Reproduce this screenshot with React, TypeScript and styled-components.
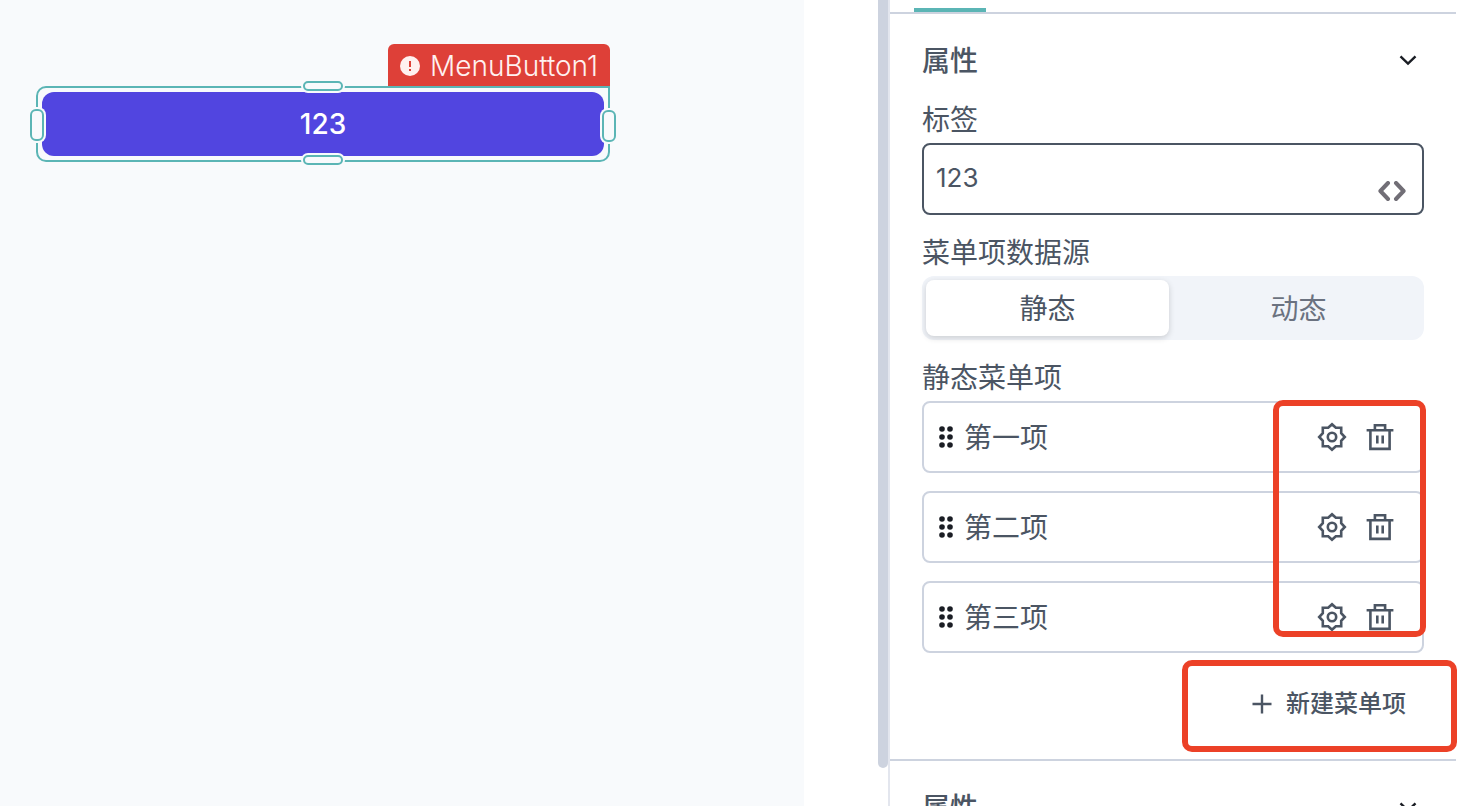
import React, { useState } from "react";
import styled, { createGlobalStyle, css } from "styled-components";

const teal = "#5bb5b5";
const ink = "#4b5563";
const line = "#cdd3df";
const canvasBg = "#f8fafc";

const GlobalStyle = createGlobalStyle`
  *, *::before, *::after { box-sizing: border-box; }
  body { margin: 0; background: #fff; }
  body, button, input {
    font-family: Inter, "Noto Sans CJK SC", sans-serif;
    font-size: 28px;
    line-height: 40px;
    color: ${ink};
  }
  button { border: 0; padding: 0; background: none; cursor: pointer; }
  h2 { margin: 0; }
`;

const Editor = styled.div`
  display: flex;
  height: 100vh;
  overflow: hidden;
`;

const Canvas = styled.main`
  flex: 1;
  min-width: 0;
  padding: 44px 36px;
  background: ${canvasBg};
`;

const Gutter = styled.div`
  flex: none;
  display: flex;
  justify-content: flex-end;
  width: 84px;
  padding-bottom: 38px;
`;

const ScrollThumb = styled.div`
  width: 10px;
  border-radius: 0 0 5px 5px;
  background: ${line};
`;

const Widget = styled.div`
  display: flex;
  flex-direction: column;
  align-items: flex-end;
  max-width: 574px;
`;

const ErrorTag = styled.div`
  display: flex;
  align-items: center;
  gap: 10px;
  height: 42px;
  padding: 2px 12px 0;
  border-radius: 6px 6px 0 0;
  background: #de4038;
  color: #fff1f0;
  font-weight: 300;
`;

const Selection = styled.div`
  position: relative;
  width: 100%;
  padding: 4px;
  border: 2px solid ${teal};
  border-radius: 10px 0 10px 10px;
`;

const MenuButton = styled.button`
  display: block;
  width: 100%;
  height: 64px;
  border-radius: 12px;
  background: #5145e0;
  color: #fff;
  font-weight: 500;
`;

const Handle = styled.span<{ $side: "top" | "bottom" | "left" | "right" }>`
  position: absolute;
  border: 2px solid ${teal};
  background: ${canvasBg};
  box-shadow: 0 0 0 2px ${canvasBg};
  ${({ $side }) =>
    $side === "top" || $side === "bottom"
      ? css`
          ${$side}: ${$side === "top" ? -7 : -5}px;
          left: calc(50% - 20px);
          width: 40px;
          height: 10px;
          border-radius: 5px;
        `
      : css`
          ${$side}: -8px;
          top: calc(50% - ${$side === "left" ? 15 : 14}px);
          width: 14px;
          height: 32px;
          border-radius: 6px;
        `}
`;

const Panel = styled.aside`
  flex: none;
  width: 576px;
  padding-right: 8px;
  border-left: 2px solid #e3e6ee;
  overflow: hidden;
`;

const TabStrip = styled.div`
  display: flex;
  align-items: flex-end;
  height: 14px;
  padding-left: 24px;
  border-bottom: 2px solid ${line};
`;

const ActiveTab = styled.span`
  width: 72px;
  height: 4px;
  background: ${teal};
`;

const Section = styled.section`
  padding: 0 32px;
  border-bottom: 2px solid ${line};
`;

const SectionToggle = styled.button`
  display: flex;
  align-items: center;
  justify-content: space-between;
  width: 100%;
  height: 84px;
  padding: 8px 6px 0 0;
  font-weight: 500;
`;

const SectionTitle = styled.span`
  padding-top: 2px;
`;

const Label = styled.label`
  display: block;
  line-height: 45px;
`;

const Field = styled.div`
  display: flex;
  height: 72px;
  padding: 0 16px 0 12px;
  border: 2px solid ${ink};
  border-radius: 8px;
  margin-bottom: 16px;
`;

const TextInput = styled.input`
  flex: 1;
  min-width: 0;
  padding: 0;
  border: 0;
  outline: 0;
  background: none;
`;

const LabelInput = styled(TextInput)`
  padding-bottom: 2px;
  font-size: 26px;
`;

const CodeButton = styled.button`
  display: flex;
  align-self: flex-end;
  padding-bottom: 12px;
`;

const Segments = styled.div`
  display: grid;
  grid-template-columns: 1fr 1fr;
  gap: 8px;
  height: 64px;
  padding: 4px;
  border-radius: 12px;
  background: #f1f4f9;
  margin-bottom: 16px;
`;

const Segment = styled.button<{ $active: boolean }>`
  padding-top: 2px;
  border-radius: 8px;
  color: #6b7280;
  ${({ $active }) =>
    $active &&
    css`
      background: #fff;
      color: ${ink};
      box-shadow: 0 2px 6px rgba(0, 0, 0, 0.16);
    `}
`;

const ListArea = styled.div`
  position: relative;
`;

const List = styled.ul`
  display: grid;
  grid-template-columns: minmax(0, 1fr);
  gap: 18px;
  margin: 0;
  padding: 0;
  list-style: none;
`;

const Item = styled.li`
  display: flex;
  align-items: center;
  height: 72px;
  padding: 0 27px 0 14px;
  border: 2px solid ${line};
  border-radius: 8px;
`;

const ItemInput = styled(TextInput)`
  margin-left: 10px;
  padding-top: 2px;
`;

const IconButton = styled.button`
  display: flex;
  margin-left: 18px;
`;

const Footer = styled.div`
  position: relative;
  display: flex;
  justify-content: flex-end;
  padding: 28px 18px 32px 0;
  height: 106px;
`;

const AddButton = styled.button`
  display: flex;
  align-items: center;
  gap: 14px;
  height: 46px;
  font-size: 24px;
  font-weight: 500;
`;

const Highlight = styled.div<{ $area: "actions" | "add" }>`
  position: absolute;
  border: 6px solid #ec4127;
  border-radius: 10px;
  pointer-events: none;
  ${({ $area }) =>
    $area === "actions"
      ? css`
          top: -1px;
          right: -2px;
          width: 153px;
          height: 237px;
        `
      : css`
          top: 7px;
          right: -33px;
          width: 275px;
          height: 92px;
        `}
`;

const ErrorIcon = () => (
  <svg width="20" height="20" viewBox="0 0 20 20" aria-hidden="true">
    <circle cx="10" cy="10" r="10" fill="#fff1f0" />
    <path d="M9 5h2v6H9zM9 13h2v2H9z" fill="#de4038" />
  </svg>
);

const Chevron = () => (
  <svg width="20" height="20" viewBox="0 0 20 20" fill="none" stroke="#1a1d24" strokeWidth="2.4" aria-hidden="true">
    <path d="M2.5 6.3 10 13.6 17.5 6.3" />
  </svg>
);

const CodeIcon = () => (
  <svg width="28" height="20" viewBox="0 0 28 20" fill="none" stroke="#716e76" strokeWidth="4" strokeLinecap="round" strokeLinejoin="round" aria-hidden="true">
    <path d="M10 2 2.4 10 10 18M18 2 25.6 10 18 18" />
  </svg>
);

const Grip = () => (
  <svg width="16" height="24" viewBox="0 0 16 24" fill="#1a1d24" aria-hidden="true">
    {[4, 12, 20].map((y) => (
      <React.Fragment key={y}>
        <circle cx="4" cy={y} r="2.8" />
        <circle cx="12" cy={y} r="2.8" />
      </React.Fragment>
    ))}
  </svg>
);

const GearIcon = () => (
  <svg width="30" height="30" viewBox="0 0 30 30" fill="none" stroke={ink} strokeWidth="2.6" aria-hidden="true">
    <path d="M15 2.2 18.8 5.8H24.2V11.2L27.8 15 24.2 18.8V24.2H18.8L15 27.8 11.2 24.2H5.8V18.8L2.2 15 5.8 11.2V5.8H11.2Z" />
    <circle cx="15" cy="15" r="4.2" />
  </svg>
);

const TrashIcon = () => (
  <svg width="30" height="30" viewBox="0 0 30 30" fill="none" stroke={ink} strokeWidth="2.6" aria-hidden="true">
    <path d="M1.6 8.3H28.4M9.9 8.3V3.3H20.1V8.3M5.4 8.3V26.9H24.6V8.3M12.3 13.4V21.4M17.7 13.4V21.4" />
  </svg>
);

const PlusIcon = () => (
  <svg width="20" height="20" viewBox="0 0 20 20" fill="none" stroke={ink} strokeWidth="2.4" aria-hidden="true">
    <path d="M10 .5V19.5M.5 10H19.5" />
  </svg>
);

const SectionHeader = () => (
  <h2>
    <SectionToggle type="button" aria-expanded="true">
      <SectionTitle>属性</SectionTitle>
      <Chevron />
    </SectionToggle>
  </h2>
);

export default function App() {
  const [source, setSource] = useState("静态");
  const [label, setLabel] = useState("123");
  const items = ["第一项", "第二项", "第三项"];

  return (
    <>
      <GlobalStyle />
      <Editor>
        <Canvas>
          <Widget>
            <ErrorTag>
              <ErrorIcon />
              MenuButton1
            </ErrorTag>
            <Selection>
              <MenuButton type="button">{label}</MenuButton>
              <Handle $side="top" />
              <Handle $side="bottom" />
              <Handle $side="left" />
              <Handle $side="right" />
            </Selection>
          </Widget>
        </Canvas>
        <Gutter>
          <ScrollThumb />
        </Gutter>
        <Panel>
          <TabStrip>
            <ActiveTab />
          </TabStrip>
          <Section>
            <SectionHeader />
            <Label htmlFor="label">标签</Label>
            <Field>
              <LabelInput id="label" value={label} onChange={(e) => setLabel(e.target.value)} />
              <CodeButton type="button" aria-label="JS">
                <CodeIcon />
              </CodeButton>
            </Field>
            <Label as="div" id="source">
              菜单项数据源
            </Label>
            <Segments role="group" aria-labelledby="source">
              {["静态", "动态"].map((name) => (
                <Segment
                  key={name}
                  type="button"
                  $active={name === source}
                  aria-pressed={name === source}
                  onClick={() => setSource(name)}
                >
                  {name}
                </Segment>
              ))}
            </Segments>
            <Label as="div">静态菜单项</Label>
            <ListArea>
              <List>
                {items.map((name) => (
                  <Item key={name}>
                    <Grip />
                    <ItemInput defaultValue={name} aria-label={name} />
                    <IconButton type="button" aria-label="设置">
                      <GearIcon />
                    </IconButton>
                    <IconButton type="button" aria-label="删除">
                      <TrashIcon />
                    </IconButton>
                  </Item>
                ))}
              </List>
              <Highlight $area="actions" />
            </ListArea>
            <Footer>
              <AddButton type="button">
                <PlusIcon />
                新建菜单项
              </AddButton>
              <Highlight $area="add" />
            </Footer>
          </Section>
          <Section>
            <SectionHeader />
          </Section>
        </Panel>
      </Editor>
    </>
  );
}
